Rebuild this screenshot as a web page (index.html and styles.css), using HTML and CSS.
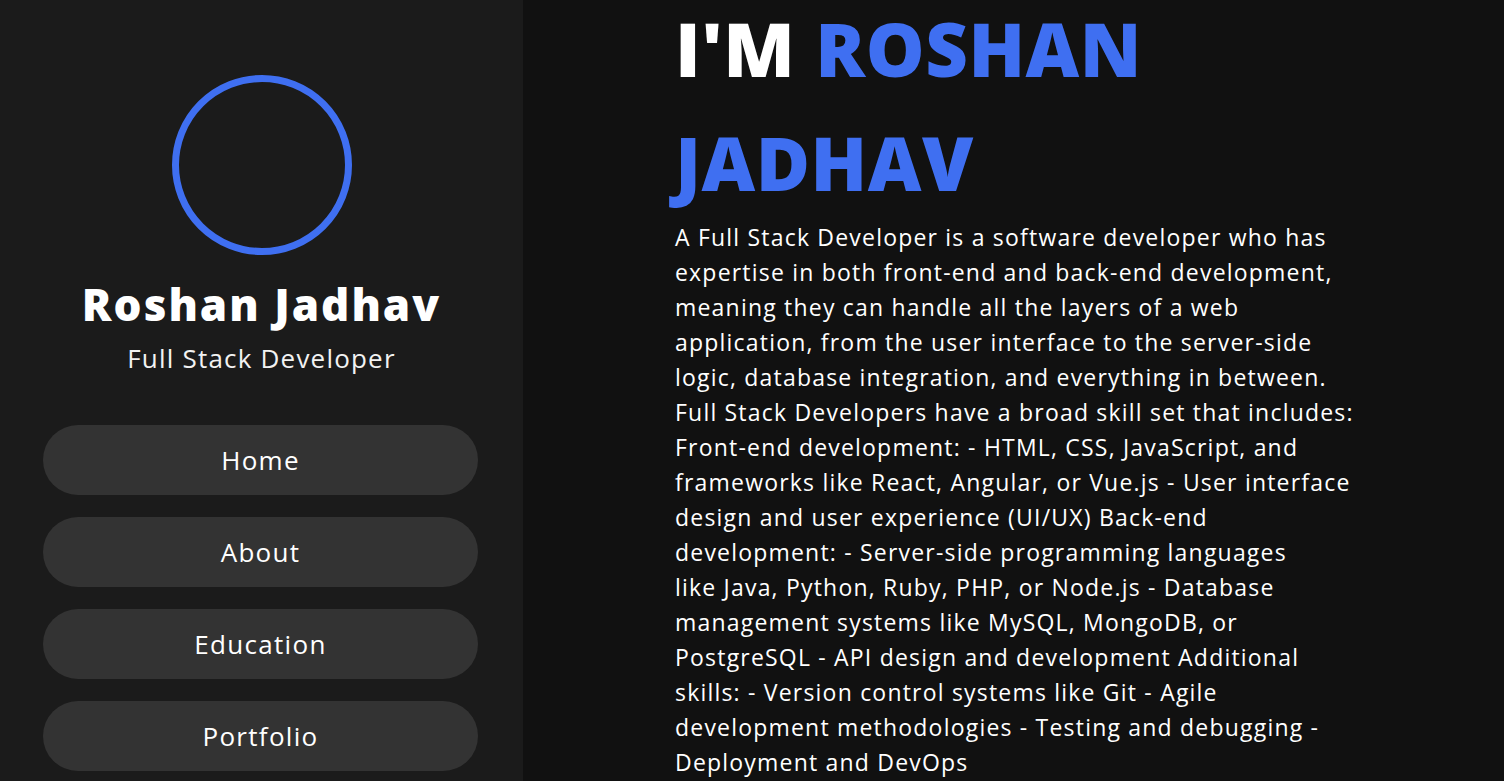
FILE: index.html
```html
<!DOCTYPE html>
<html lang="en">
<head>
<meta charset="utf-8">
<title>Roshan Jadhav</title>
<link rel="stylesheet" href="styles.css">
</head>
<body>
<div class="page">
  <aside class="sidebar">
    <div class="avatar"></div>
    <h2 class="name">Roshan Jadhav</h2>
    <p class="role">Full Stack Developer</p>
    <nav class="nav">
      <a class="nav-btn" href="#">Home</a>
      <a class="nav-btn" href="#">About</a>
      <a class="nav-btn" href="#">Education</a>
      <a class="nav-btn" href="#">Portfolio</a>
    </nav>
  </aside>
  <main class="main">
    <div class="content">
      <h1 class="title">I'M <span class="accent">ROSHAN JADHAV</span></h1>
      <p class="bio">A Full Stack Developer is a software developer who has expertise in both front-end and back-end development, meaning they can handle all the layers of a web application, from the user interface to the server-side logic, database integration, and everything in between. Full Stack Developers have a broad skill set that includes: Front-end development: - HTML, CSS, JavaScript, and frameworks like React, Angular, or Vue.js - User interface design and user experience (UI/UX) Back-end development: - Server-side programming languages<br>like Java, Python, Ruby, PHP, or Node.js - Database management systems like MySQL, MongoDB, or PostgreSQL - API design and development Additional skills: - Version control systems like Git - Agile development methodologies - Testing and debugging - Deployment and DevOps</p>
    </div>
  </main>
</div>
</body>
</html>
```

FILE: styles.css
```css
* { box-sizing: border-box; }
html, body {
  margin: 0;
  padding: 0;
  height: 100%;
  overflow: hidden;
}
body {
  font-family: "Open Sans", "DejaVu Sans", sans-serif;
  color: #fff;
  background: #111111;
}
.page {
  display: flex;
  height: 100vh;
}
.sidebar {
  width: 523px;
  flex-shrink: 0;
  background: #1b1b1b;
  display: flex;
  flex-direction: column;
  align-items: center;
  padding-top: 75px;
}
.avatar {
  width: 180px;
  height: 180px;
  border-radius: 50%;
  border: 7px solid #3f6ff1;
}
.name {
  margin: 23px 0 0;
  font-size: 44px;
  line-height: 52px;
  font-weight: 800;
  letter-spacing: 2px;
}
.role {
  margin: 13px 0 0;
  font-size: 26px;
  line-height: 30px;
  letter-spacing: 1.2px;
  color: #f2f2f2;
}
.nav {
  margin: 52px 2px 0 0;
  display: flex;
  flex-direction: column;
  gap: 22px;
}
.nav-btn {
  width: 435px;
  height: 70px;
  border-radius: 35px;
  background: #333333;
  color: #fff;
  text-decoration: none;
  font-size: 26px;
  letter-spacing: 1.3px;
  display: flex;
  align-items: center;
  justify-content: center;
}
.main {
  flex: 1;
  height: 100vh;
  padding-left: 152px;
}
.content {
  width: 690px;
}
.title {
  margin: -8px 0 0;
  font-size: 74px;
  line-height: 114px;
  font-weight: 800;
  letter-spacing: 0.5px;
}
.accent { color: #3f6ff1; }
.bio {
  margin: 0;
  font-size: 23px;
  line-height: 35px;
  letter-spacing: 1.2px;
}
```
